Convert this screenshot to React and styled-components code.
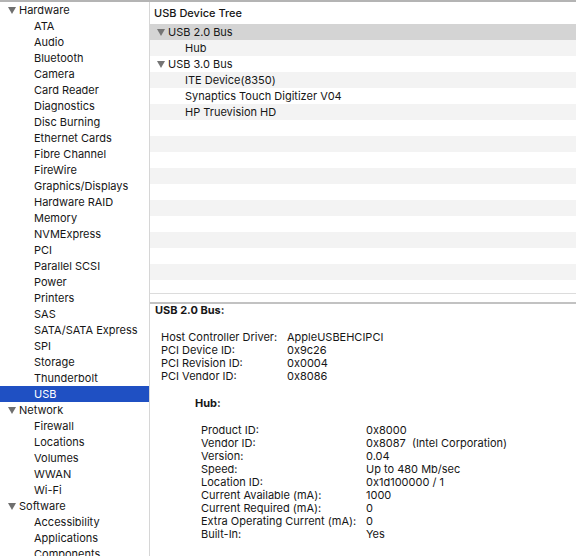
import React from 'react'
import styled, { createGlobalStyle, css } from 'styled-components'

const GlobalStyle = createGlobalStyle`
  html, body {
    margin: 0;
    padding: 0;
    background: #fff;
  }
  body {
    font-family: Inter, "Liberation Sans", Arial, sans-serif;
    font-size: 11px;
    color: #161616;
    -webkit-font-smoothing: antialiased;
  }
`

const sidebarGroups = [
  {
    title: 'Hardware',
    items: [
      'ATA', 'Audio', 'Bluetooth', 'Camera', 'Card Reader', 'Diagnostics',
      'Disc Burning', 'Ethernet Cards', 'Fibre Channel', 'FireWire',
      'Graphics/Displays', 'Hardware RAID', 'Memory', 'NVMExpress', 'PCI',
      'Parallel SCSI', 'Power', 'Printers', 'SAS', 'SATA/SATA Express', 'SPI',
      'Storage', 'Thunderbolt', 'USB',
    ],
  },
  {
    title: 'Network',
    items: ['Firewall', 'Locations', 'Volumes', 'WWAN', 'Wi-Fi'],
  },
  {
    title: 'Software',
    items: ['Accessibility', 'Applications', 'Components'],
  },
]

const treeRows = [
  { label: 'USB 2.0 Bus', level: 0, selected: true },
  { label: 'Hub', level: 1 },
  { label: 'USB 3.0 Bus', level: 0 },
  { label: 'ITE Device(8350)', level: 1 },
  { label: 'Synaptics Touch Digitizer V04', level: 1 },
  { label: 'HP Truevision HD', level: 1 },
]

const busInfo = [
  ['Host Controller Driver:', 'AppleUSBEHCIPCI'],
  ['PCI Device ID:', '0x9c26'],
  ['PCI Revision ID:', '0x0004'],
  ['PCI Vendor ID:', '0x8086'],
]

const hubInfo = [
  ['Product ID:', '0x8000'],
  ['Vendor ID:', '0x8087  (Intel Corporation)'],
  ['Version:', '0.04'],
  ['Speed:', 'Up to 480 Mb/sec'],
  ['Location ID:', '0x1d100000 / 1'],
  ['Current Available (mA):', '1000'],
  ['Current Required (mA):', '0'],
  ['Extra Operating Current (mA):', '0'],
  ['Built-In:', 'Yes'],
]

const App = () => {
  const fillerCount = 17 - treeRows.length

  return (
    <>
      <GlobalStyle />
      <Window>
        <Sidebar>
          {sidebarGroups.map((group) => (
            <React.Fragment key={group.title}>
              <SidebarRow>
                <Disclosure />
                {group.title}
              </SidebarRow>
              {group.items.map((item) => (
                <SidebarRow key={item} child active={item === 'USB'}>
                  {item}
                </SidebarRow>
              ))}
            </React.Fragment>
          ))}
        </Sidebar>

        <Main>
          <TreePane>
            <TreeHeader>USB Device Tree</TreeHeader>
            <TreeList>
              {treeRows.map((row, i) => (
                <TreeRow key={row.label} striped={i % 2 === 1} selected={row.selected}>
                  {row.level === 0 ? <TreeDisclosure /> : <ChildIndent />}
                  {row.label}
                </TreeRow>
              ))}
              {[...Array(fillerCount)].map((_e, i) => (
                <TreeRow key={`f${i}`} striped={(i + treeRows.length) % 2 === 1} />
              ))}
            </TreeList>
            <TreeFooter />
          </TreePane>

          <Details>
            <SectionTitle>USB 2.0 Bus:</SectionTitle>
            <InfoGrid labelWidth={126} indent={6}>
              {busInfo.map(([k, v]) => (
                <React.Fragment key={k}>
                  <InfoLabel>{k}</InfoLabel>
                  <InfoValue>{v}</InfoValue>
                </React.Fragment>
              ))}
            </InfoGrid>

            <SubTitle>Hub:</SubTitle>
            <InfoGrid labelWidth={165} indent={46}>
              {hubInfo.map(([k, v]) => (
                <React.Fragment key={k}>
                  <InfoLabel>{k}</InfoLabel>
                  <InfoValue>{v}</InfoValue>
                </React.Fragment>
              ))}
            </InfoGrid>
          </Details>
        </Main>
      </Window>
    </>
  )
}

const Window = styled.div`
  display: flex;
  width: 576px;
  height: 556px;
  border-top: 2px solid #b4b4b4;
  box-sizing: border-box;
  overflow: hidden;
`

const Sidebar = styled.div`
  width: 149px;
  flex-shrink: 0;
  border-right: 1px solid #d6d6d6;
  overflow: hidden;
`

const SidebarRow = styled.div`
  display: flex;
  align-items: center;
  height: 16px;
  padding-left: ${(props) => (props.child ? '34px' : '8px')};
  white-space: nowrap;
  color: #161616;

  ${(props) =>
    props.active &&
    css`
      background: #1f50c3;
      color: #fff;
    `}
`

const Disclosure = styled.span`
  width: 0;
  height: 0;
  margin-right: 3px;
  border-left: 4px solid transparent;
  border-right: 4px solid transparent;
  border-top: 7px solid #6f6f6f;
`

const Main = styled.div`
  flex: 1;
  display: flex;
  flex-direction: column;
  min-width: 0;
`

const TreePane = styled.div`
  display: flex;
  flex-direction: column;
`

const TreeHeader = styled.div`
  height: 22px;
  display: flex;
  align-items: center;
  padding-left: 4px;
  font-weight: 500;
`

const TreeList = styled.div`
  height: 269px;
  overflow: hidden;
  border-bottom: 1px solid #dcdcdc;
`

const TreeRow = styled.div`
  display: flex;
  align-items: center;
  height: 16px;
  padding-left: 7px;
  white-space: nowrap;
  background: ${(props) =>
    props.selected ? '#d4d4d4' : props.striped ? '#f3f3f3' : '#fff'};
`

const TreeDisclosure = styled(Disclosure)`
  margin-right: 3px;
  border-top-color: #757575;
`

const ChildIndent = styled.span`
  width: 28px;
  flex-shrink: 0;
`

const TreeFooter = styled.div`
  height: 8px;
  border-bottom: 2px solid #c2c2c2;
`

const Details = styled.div`
  padding: 0 5px;
  line-height: 13px;
`

const SectionTitle = styled.div`
  font-weight: 700;
  margin-bottom: 14px;
`

const SubTitle = styled(SectionTitle)`
  margin: 14px 0 14px 40px;
`

const InfoGrid = styled.div`
  display: grid;
  grid-template-columns: ${(props) => props.labelWidth}px auto;
  padding-left: ${(props) => props.indent}px;
`

const InfoLabel = styled.div`
  white-space: nowrap;
`

const InfoValue = styled.div`
  white-space: pre;
`

export default App
